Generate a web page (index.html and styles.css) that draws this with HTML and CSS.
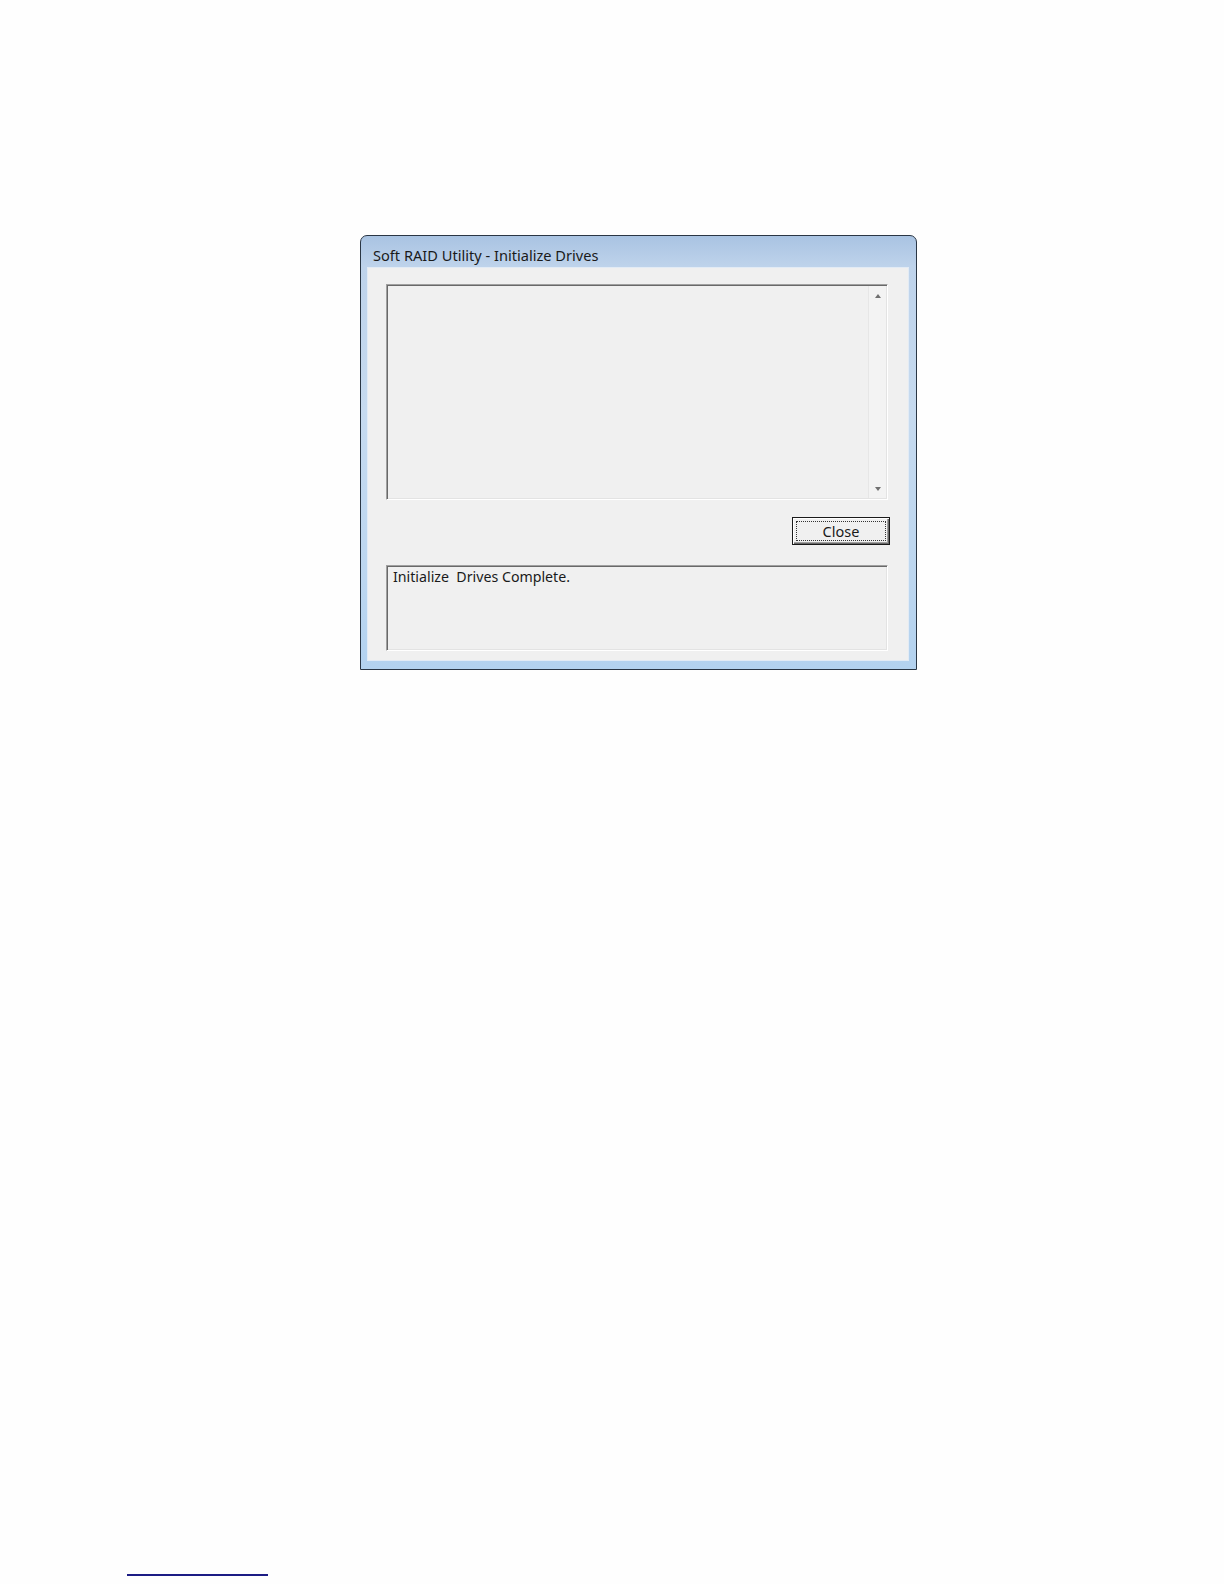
FILE: index.html
```html
<!DOCTYPE html>
<html>
<head>
<meta charset="utf-8">
<link rel="stylesheet" href="styles.css">
<title>Soft RAID Utility - Initialize Drives</title>
</head>
<body>
<div class="page">
  <div class="window">
    <div class="titlebar"><span class="title">Soft RAID Utility - Initialize Drives</span></div>
    <div class="client">
      <div class="listbox">
        <div class="list-body"></div>
        <div class="scrollbar">
          <span class="arrow arrow-up"></span>
          <span class="arrow arrow-down"></span>
        </div>
      </div>
      <div class="button-row">
        <button class="btn"><span class="btn-focus">Close</span></button>
      </div>
      <div class="status">Initialize&nbsp; Drives Complete.</div>
    </div>
  </div>
  <div class="footer-line"></div>
</div>
</body>
</html>
```
FILE: styles.css
```css
html, body {
  margin: 0;
  padding: 0;
  background: #fefefe;
}

.page {
  box-sizing: border-box;
  width: 1224px;
  min-height: 1584px;
  display: flex;
  flex-direction: column;
  padding: 235px 0 8px 360px;
  font-family: "Noto Sans", "Liberation Sans", sans-serif;
}

.window {
  box-sizing: border-box;
  width: 557px;
  height: 435px;
  border: 1px solid #2a3644;
  border-radius: 7px 7px 0 0;
  background: linear-gradient(to bottom, #a9c3e2 0%, #bed3eb 7%, #c6daef 40%, #bcd6ef 80%, #b3d2ef 100%);
  display: flex;
  flex-direction: column;
  padding: 0 8px 9px 7px;
}

.titlebar {
  height: 32px;
  display: flex;
  align-items: center;
  padding-left: 5px;
}

.title {
  font-size: 14.6px;
  color: #1a1a1a;
  padding-top: 5px;
}

.client {
  flex: 1;
  background: #f0f0f0;
  box-shadow: 0 0 0 1px #e2ebf5;
  display: flex;
  flex-direction: column;
  padding: 16px 20px 8px 18px;
}

.listbox {
  height: 216px;
  box-sizing: border-box;
  border: 1px solid;
  border-color: #a0a0a0 #ffffff #ffffff #a0a0a0;
  box-shadow: inset 1px 1px 0 #696969, inset -1px -1px 0 #e3e3e3;
  display: flex;
  padding: 1px;
}

.list-body {
  flex: 1;
}

.scrollbar {
  width: 17px;
  border-left: 1px solid #e6e6e6;
  background: #f3f3f3;
  display: flex;
  flex-direction: column;
  justify-content: space-between;
  align-items: center;
  padding: 8px 0 7px;
}

.arrow {
  width: 0;
  height: 0;
  border-left: 3.5px solid transparent;
  border-right: 3.5px solid transparent;
}

.arrow-up {
  border-bottom: 4px solid #707070;
}

.arrow-down {
  border-top: 4px solid #707070;
}

.button-row {
  display: flex;
  justify-content: flex-end;
  margin-top: 17px;
  margin-right: -2px;
}

.btn {
  box-sizing: border-box;
  width: 98px;
  height: 28px;
  padding: 3px;
  margin: 0;
  background: #f0f0f0;
  border: 1px solid #1a1a1a;
  box-shadow: inset 1px 1px 0 #ffffff, inset -1px -1px 0 #696969, inset -2px -2px 0 #a0a0a0;
  font-family: "Noto Sans", "Liberation Sans", sans-serif;
  font-size: 14.5px;
  color: #1a1a1a;
  display: flex;
}

.btn-focus {
  flex: 1;
  border: 1px dotted #333;
  display: flex;
  align-items: center;
  justify-content: center;
  line-height: 1;
}

.status {
  margin-top: 20px;
  height: 86px;
  box-sizing: border-box;
  border: 1px solid;
  border-color: #a0a0a0 #ffffff #ffffff #a0a0a0;
  box-shadow: inset 1px 1px 0 #696969, inset -1px -1px 0 #e3e3e3;
  padding: 1px 6px;
  font-size: 14.2px;
  color: #1a1a1a;
}

.footer-line {
  margin-top: auto;
  margin-left: -233px;
  width: 141px;
  height: 2px;
  background: #1c1c84;
}
```
